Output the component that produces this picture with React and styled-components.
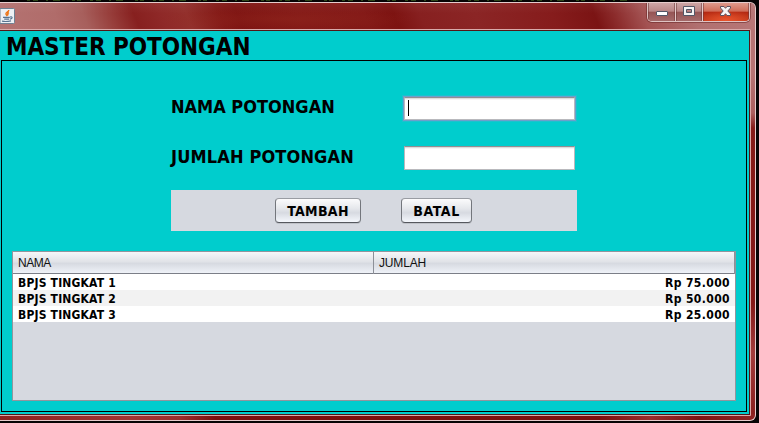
import React from "react";
import styled, { createGlobalStyle } from "styled-components";

const Global = createGlobalStyle`
  * { box-sizing: border-box; }
  html, body { margin: 0; padding: 0; background: #070506; overflow: hidden; }
`;

const bold = `"DejaVu Sans Condensed", "DejaVu Sans", sans-serif`;

const glassStops = [
  ["#b47372", 0], ["#b06c6a", 60], ["#a75f5c", 88], ["#973d3a", 115],
  ["#87201f", 138], ["#8f2928", 165], ["#93302c", 190], ["#841a17", 222],
  ["#7e1412", 240], ["#841a17", 300], ["#831917", 365], ["#7d1311", 394],
  ["#872020", 420], ["#8b2525", 475], ["#861c1c", 550], ["#7b1414", 592],
  ["#8c2c2c", 612], ["#a35252", 640], ["#b07070", 690], ["#b87777", 755],
].map(([color, x]) => `${color} ${((x / 755) * 100).toFixed(2)}%`).join(", ");

const Desktop = styled.div`
  width: 759px;
  height: 423px;
  background: #070405;
  overflow: hidden;
  display: flex;
  flex-direction: column;
`;

const CodeStrip = styled.svg`
  display: block;
  flex: none;
`;

const WindowFrame = styled.div`
  width: 756px;
  height: 419px;
  display: flex;
  flex-direction: column;
  border: 1px solid #e6cccc;
  border-left: 0;
  border-radius: 0 6px 6px 0;
  overflow: hidden;
  background:
    linear-gradient(90deg, #8c211e 0, #a03432 130px, #9a2e2c 180px, #7a0f0d 215px, #7a100e 600px, #982c2b 650px, #7c1312 700px, #902524 756px) 0 100% / 100% 6px no-repeat,
    linear-gradient(180deg, #b67474 0, #b67474 70px, #ab5f5f 110px, #861b19 125px, #841817 300px, #a23c3c 350px, #861c1b 419px);
`;

const TitleBar = styled.div`
  height: 26px;
  flex: none;
  display: flex;
  justify-content: space-between;
  background:
    radial-gradient(ellipse 130px 11px at 285px 16px, #94291f66, transparent),
    linear-gradient(180deg, #ffffff0c, transparent 40%),
    linear-gradient(68deg, ${glassStops});
`;

const JavaIcon = styled.svg`
  display: block;
  margin-top: 5px;
`;

const Controls = styled.div`
  width: 103px;
  height: 19px;
  margin-right: 5px;
  display: flex;
  border: 1px solid #dfc3c3;
  border-top: 0;
  border-radius: 0 0 5px 5px;
  box-shadow: 0 0 0 1px #65252588;
  overflow: hidden;
`;

const closeFill = "radial-gradient(ellipse 29px 10px at 50% 95%, #e9542d, transparent), linear-gradient(180deg, #df9a8c 0, #cf6c58 46%, #b42812 50%, #c23a1b 100%)";
const plainFill = "linear-gradient(180deg, #cda5a5 0, #b98686 46%, #955454 50%, #a46a6a 100%)";

const ControlButton = styled.button`
  width: ${(p) => p.$width}px;
  flex: none;
  padding: 0;
  border: 0;
  border-right: ${(p) => (p.$close ? "0" : "1px solid #e5caca")};
  box-shadow: inset 1px 0 #6b343488, inset -1px 0 #6b343488;
  background: ${(p) => (p.$close ? closeFill : plainFill)};
  display: flex;

  svg { display: block; }
`;

const Body = styled.div`
  display: flex;
  flex-direction: column;
  width: 751px;
  height: 387px;
  border: 1px solid #d8aaaa;
  border-left: 0;
  border-radius: 0 2px 1px 0;
`;

const Client = styled.main`
  height: 385px;
  width: 750px;
  border: 1px solid #541616;
  border-left: 0;
  background: #00cdcd;
  padding: 0 2px 2px 1px;
`;

const Heading = styled.h1`
  height: 29px;
  margin: 0;
  padding: 2px 0 0 5px;
  font: bold 24px/29px ${bold};
  letter-spacing: -0.05px;
  color: #000;
  white-space: nowrap;
`;

const Content = styled.section`
  width: 746px;
  height: 352px;
  border: 1px solid #000;
  padding: 34px 10px 0;
`;

const Form = styled.div`
  display: grid;
  grid-template-columns: 232px 173px;
  grid-template-rows: 26px 26px;
  row-gap: 24px;
  margin-left: 159px;
`;

const Label = styled.label`
  font: bold 18px/24px ${bold};
  letter-spacing: ${(p) => p.$spacing}px;
  color: #000;
  white-space: nowrap;
`;

const Field = styled.div`
  width: 171px;
  height: ${(p) => (p.$focused ? 23 : 24)}px;
  margin: ${(p) => (p.$focused ? "2px" : "1px")} 0 0 1px;
  border: 1px solid #b9b9bd;
  border-top-color: #938e92;
  background: linear-gradient(180deg, #dcdcdc 0 1px, #f5f5f5 1px 2px, #fff 2px);
  box-shadow: ${(p) => (p.$focused ? "0 0 0 1px #6d9fcb, 0 0 0 2px #35b7cc88" : "none")};
  padding: 2px 0 0 3px;
`;

const Caret = styled.span`
  display: block;
  width: 1px;
  height: 16px;
  background: #000;
`;

const ButtonPanel = styled.div`
  width: 406px;
  height: 41px;
  margin: 19px 0 0 159px;
  padding: 8px 0 0 104px;
  display: flex;
  gap: 40px;
  background: #d6d9e0;
`;

const Button = styled.button`
  width: ${(p) => p.$width}px;
  height: 25px;
  padding: 1px 0 0;
  border: 1px solid;
  border-color: #999ca2 #73767c #55585e;
  border-radius: 4px;
  background: linear-gradient(180deg, #fbfbfc 0, #e6e8ec 40%, #d7dae1 60%, #f4f7fc 100%);
  box-shadow: 0 1px #bfc2c8;
  font: bold 14px/20px ${bold};
  letter-spacing: ${(p) => p.$spacing}px;
  color: #000;
`;

const TablePane = styled.div`
  width: 724px;
  height: 150px;
  margin-top: 20px;
  border: 1px solid #92959d;
  background: #d6d9e0;
`;

const HeaderRow = styled.div`
  display: grid;
  grid-template-columns: 361px 361px;
  height: 22px;
  border-bottom: 1px solid #7b7e87;
  background: linear-gradient(180deg, #f6f7f9 0, #e1e3e8 45%, #d7dae1 55%, #eff2f8 100%);
`;

const HeaderCell = styled.div`
  padding-left: 5px;
  border-right: 1px solid #8d9098;
  font: 12px/22px "Liberation Sans", Arial, sans-serif;
  letter-spacing: ${(p) => p.$spacing}px;
  color: #111;
`;

const Row = styled.div`
  display: flex;
  justify-content: space-between;
  height: 16px;
  padding: 1px 5px 0;
  background: ${(p) => (p.$alt ? "#f2f2f2" : "#fff")};
  font: bold 12px/17px ${bold};
  color: #000;
  white-space: nowrap;
`;

const Cell = styled.span`
  letter-spacing: ${(p) => (p.$amount ? 0.4 : 0.18)}px;
`;

const rows = [
  ["BPJS TINGKAT 1", "Rp 75.000"],
  ["BPJS TINGKAT 2", "Rp 50.000"],
  ["BPJS TINGKAT 3", "Rp 25.000"],
];

export default function App() {
  return (
    <Desktop>
      <Global />
      <CodeStrip width="759" height="2">
        <path d="M27 .5H636" stroke="#2c4618" strokeDasharray="3 3 5 8 2 5 7 12 3 2 4 9" />
      </CodeStrip>
      <WindowFrame>
        <TitleBar>
          <JavaIcon width="15" height="16" viewBox="0 0 15 16">
            <path d="M0 .5H13.5Q14.5 .5 14.5 1.5V14.5Q14.5 15.5 13.5 15.5H0Z" fill="#edf0f4" stroke="#6f8092" />
            <path d="M8.8 2C9 4 5 4.5 6 6.3L7.3 8M9 4.7C7.5 5.5 7.2 6 8.3 7.4" fill="none" stroke="#ed7518" strokeWidth="1.4" />
            <path d="M3 9.3H9.8M4.2 11.2H9M2 13.1Q6 14 11 12.8M10 9Q12.5 8.5 12 10Q11.5 11 9.8 11.2" fill="none" stroke="#58728f" strokeWidth="1.2" />
          </JavaIcon>
          <Controls>
            <ControlButton $width={28} aria-label="Minimize">
              <svg width="27" height="18">
                <rect x="8.5" y="8.5" width="11" height="4" rx=".5" fill="#fff" stroke="#535666" />
              </svg>
            </ControlButton>
            <ControlButton $width={27} aria-label="Maximize">
              <svg width="26" height="18">
                <path fillRule="evenodd" d="M7.5 3.5H18.5V12.5H7.5ZM10.5 6.5V9.5H15.5V6.5Z" fill="#f5f3f3" stroke="#535666" />
              </svg>
            </ControlButton>
            <ControlButton $width={46} $close aria-label="Close">
              <svg width="46" height="18">
                <path d="M17.5 3.5H21L22.5 5.3L24 3.5H27.5V5L24.8 8L27.5 11V12.5H24L22.5 10.7L21 12.5H17.5V11L20.2 8L17.5 5Z" fill="#f8f5f5" stroke="#5d5360" />
              </svg>
            </ControlButton>
          </Controls>
        </TitleBar>
        <Body>
          <Client>
            <Heading>MASTER POTONGAN</Heading>
            <Content>
              <Form>
                <Label $spacing={0}>NAMA POTONGAN</Label>
                <Field $focused><Caret /></Field>
                <Label $spacing={0.15}>JUMLAH POTONGAN</Label>
                <Field />
              </Form>
              <ButtonPanel>
                <Button $width={86} $spacing={0.3}>TAMBAH</Button>
                <Button $width={71} $spacing={0.6}>BATAL</Button>
              </ButtonPanel>
              <TablePane>
                <HeaderRow>
                  <HeaderCell $spacing={-0.5}>NAMA</HeaderCell>
                  <HeaderCell $spacing={-0.15}>JUMLAH</HeaderCell>
                </HeaderRow>
                {rows.map(([name, amount], i) => (
                  <Row key={name} $alt={i % 2 === 1}>
                    <Cell>{name}</Cell>
                    <Cell $amount>{amount}</Cell>
                  </Row>
                ))}
              </TablePane>
            </Content>
          </Client>
        </Body>
      </WindowFrame>
    </Desktop>
  );
}
